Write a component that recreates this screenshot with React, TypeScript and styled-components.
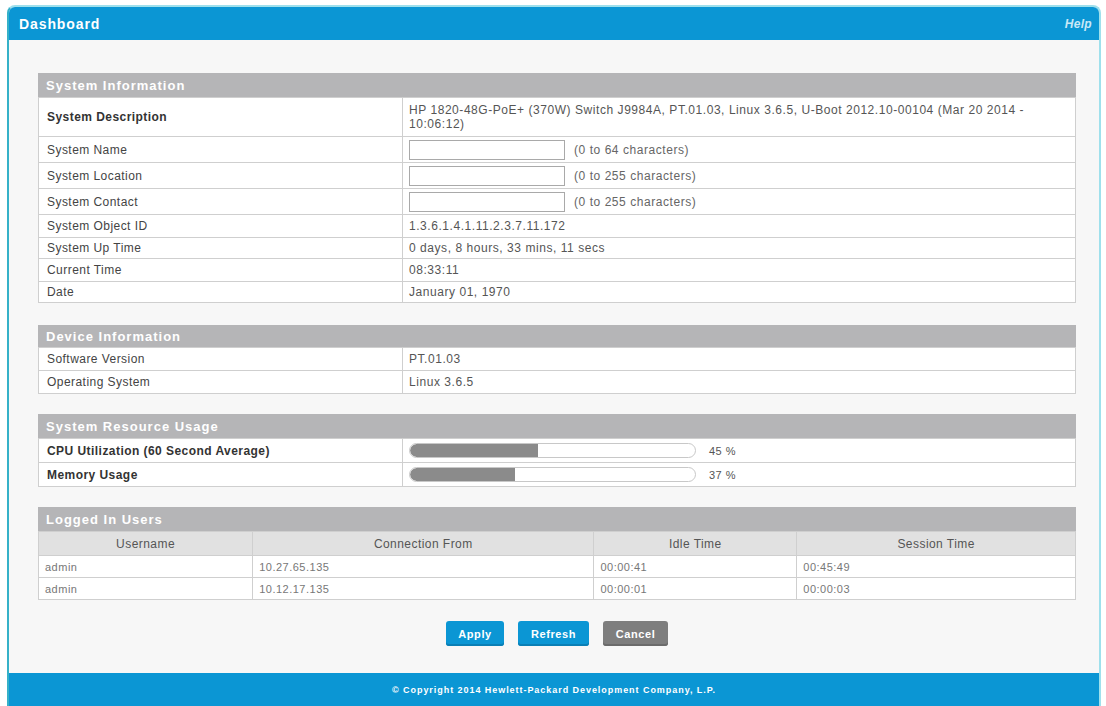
import React from "react";
import styled, { createGlobalStyle } from "styled-components";

const GlobalStyle = createGlobalStyle`
  html, body {
    margin: 0;
    padding: 0;
    background: #ffffff;
    font-family: "Liberation Sans", Arial, sans-serif;
  }
`;

const Frame = styled.div`
  margin: 5px 0 0 7px;
  width: 1094px;
  height: 701px;
  box-sizing: border-box;
  border: 2px solid #9fe0ec;
  border-left-color: #35b1c8;
  border-bottom: none;
  border-radius: 8px 8px 0 0;
  background: #f7f7f7;
  display: flex;
  flex-direction: column;
  overflow: hidden;
`;

const TopBar = styled.div`
  height: 33px;
  flex: none;
  background: #0b96d4;
  display: flex;
  align-items: center;
  justify-content: space-between;
  padding: 0 7px 0 10px;
`;

const Title = styled.div`
  color: #ffffff;
  font-weight: bold;
  font-size: 14px;
  letter-spacing: 0.9px;
`;

const Help = styled.a`
  color: #c9e8f7;
  font-weight: bold;
  font-style: italic;
  font-size: 12px;
  letter-spacing: 0.3px;
`;

const Content = styled.div`
  flex: 1;
  padding: 33px 23px 0 29px;
  display: flex;
  flex-direction: column;
`;

const Section = styled.div<{ $gap: number }>`
  margin-bottom: ${(p) => p.$gap}px;
`;

const SectionHead = styled.div<{ $h: number }>`
  height: ${(p) => p.$h}px;
  background: #b5b5b7;
  color: #ffffff;
  font-weight: bold;
  font-size: 13px;
  letter-spacing: 1px;
  display: flex;
  align-items: center;
  padding-left: 8px;
`;

const Table = styled.table`
  width: 100%;
  border-collapse: collapse;
  background: #ffffff;
  table-layout: fixed;
`;

const Row = styled.tr<{ $h: number }>`
  height: ${(p) => p.$h}px;
`;

const Label = styled.td<{ $bold?: boolean }>`
  width: 347px;
  border: 1px solid #cfcfcf;
  padding: 0 8px;
  font-size: 12px;
  letter-spacing: 0.45px;
  color: ${(p) => (p.$bold ? "#333" : "#444")};
  font-weight: ${(p) => (p.$bold ? "bold" : "normal")};
  vertical-align: middle;
`;

const Value = styled.td`
  border: 1px solid #cfcfcf;
  padding: 0 6px;
  font-size: 12px;
  letter-spacing: 0.55px;
  color: #555;
  line-height: 14px;
  vertical-align: middle;
`;

const InputLine = styled.div`
  display: flex;
  align-items: center;
  gap: 9px;
`;

const TextInput = styled.input`
  width: 156px;
  height: 20px;
  box-sizing: border-box;
  border: 1px solid #a9a9a9;
  background: #fff;
  margin: 0;
`;

const Hint = styled.span`
  color: #666;
`;

const Bar = styled.div`
  width: 287px;
  height: 15px;
  box-sizing: border-box;
  border: 1px solid #c8c8c8;
  border-radius: 8px;
  background: #fff;
  overflow: hidden;
`;

const Fill = styled.div`
  height: 100%;
  background: #8b8b8b;
  border-radius: 7px 0 0 7px;
`;

const Percent = styled.span`
  color: #555;
  margin-left: 13px;
  font-size: 11px;
  letter-spacing: 0.5px;
`;

const BarLine = styled.div`
  display: flex;
  align-items: center;
`;

const HeadCell = styled.th<{ $w: string }>`
  width: ${(p) => p.$w};
  background: #e1e1e1;
  border: 1px solid #cfcfcf;
  font-weight: normal;
  font-size: 12px;
  letter-spacing: 0.45px;
  color: #555;
  text-align: center;
`;

const Cell = styled.td`
  border: 1px solid #cfcfcf;
  padding: 0 6px;
  font-size: 11px;
  letter-spacing: 0.5px;
  color: #777;
`;

const Buttons = styled.div`
  display: flex;
  justify-content: center;
  gap: 14px;
  margin: 21px 0 0 0;
`;

const Button = styled.button<{ $grey?: boolean; $w: number }>`
  width: ${(p) => p.$w}px;
  height: 25px;
  border: none;
  border-radius: 3px;
  background: ${(p) => (p.$grey ? "#7e7e7e" : "#0b96d4")};
  box-shadow: inset 0 -2px 0 ${(p) => (p.$grey ? "#6b6b6b" : "#0a7fb5")};
  color: #fff;
  font-family: "Liberation Sans", Arial, sans-serif;
  font-weight: bold;
  font-size: 11px;
  letter-spacing: 0.6px;
  padding: 0;
`;

const Footer = styled.div`
  height: 33px;
  flex: none;
  background: #0b96d4;
  color: #fff;
  font-weight: bold;
  font-size: 9px;
  letter-spacing: 0.95px;
  display: flex;
  align-items: center;
  justify-content: center;
`;

type InfoRow = { label: string; value: React.ReactNode; h: number; bold?: boolean };

const InfoTable = ({ rows }: { rows: InfoRow[] }) => (
  <Table>
    <tbody>
      {rows.map((r) => (
        <Row key={r.label} $h={r.h}>
          <Label $bold={r.bold}>{r.label}</Label>
          <Value>{r.value}</Value>
        </Row>
      ))}
    </tbody>
  </Table>
);

const Field = ({ hint }: { hint: string }) => (
  <InputLine>
    <TextInput type="text" />
    <Hint>{hint}</Hint>
  </InputLine>
);

const Usage = ({ pct }: { pct: number }) => (
  <BarLine>
    <Bar>
      <Fill style={{ width: `${pct}%` }} />
    </Bar>
    <Percent>{pct} %</Percent>
  </BarLine>
);

const systemRows: InfoRow[] = [
  {
    label: "System Description",
    bold: true,
    h: 39,
    value:
      "HP 1820-48G-PoE+ (370W) Switch J9984A, PT.01.03, Linux 3.6.5, U-Boot 2012.10-00104 (Mar 20 2014 - 10:06:12)",
  },
  { label: "System Name", h: 26, value: <Field hint="(0 to 64 characters)" /> },
  { label: "System Location", h: 26, value: <Field hint="(0 to 255 characters)" /> },
  { label: "System Contact", h: 26, value: <Field hint="(0 to 255 characters)" /> },
  { label: "System Object ID", h: 23, value: "1.3.6.1.4.1.11.2.3.7.11.172" },
  { label: "System Up Time", h: 21, value: "0 days, 8 hours, 33 mins, 11 secs" },
  { label: "Current Time", h: 23, value: "08:33:11" },
  { label: "Date", h: 21, value: "January 01, 1970" },
];

const deviceRows: InfoRow[] = [
  { label: "Software Version", h: 23, value: "PT.01.03" },
  { label: "Operating System", h: 23, value: "Linux 3.6.5" },
];

const usageRows: InfoRow[] = [
  { label: "CPU Utilization (60 Second Average)", bold: true, h: 24, value: <Usage pct={45} /> },
  { label: "Memory Usage", bold: true, h: 24, value: <Usage pct={37} /> },
];

const users = [
  { name: "admin", from: "10.27.65.135", idle: "00:00:41", session: "00:45:49" },
  { name: "admin", from: "10.12.17.135", idle: "00:00:01", session: "00:00:03" },
];

export default function App() {
  return (
    <>
      <GlobalStyle />
      <Frame>
        <TopBar>
          <Title>Dashboard</Title>
          <Help>Help</Help>
        </TopBar>
        <Content>
          <Section $gap={22}>
            <SectionHead $h={24}>System Information</SectionHead>
            <InfoTable rows={systemRows} />
          </Section>
          <Section $gap={20}>
            <SectionHead $h={22}>Device Information</SectionHead>
            <InfoTable rows={deviceRows} />
          </Section>
          <Section $gap={20}>
            <SectionHead $h={24}>System Resource Usage</SectionHead>
            <InfoTable rows={usageRows} />
          </Section>
          <Section $gap={0}>
            <SectionHead $h={24}>Logged In Users</SectionHead>
            <Table>
              <thead>
                <Row $h={24}>
                  <HeadCell $w="20.6%">Username</HeadCell>
                  <HeadCell $w="33%">Connection From</HeadCell>
                  <HeadCell $w="19.5%">Idle Time</HeadCell>
                  <HeadCell $w="26.9%">Session Time</HeadCell>
                </Row>
              </thead>
              <tbody>
                {users.map((u, i) => (
                  <Row key={i} $h={22}>
                    <Cell>{u.name}</Cell>
                    <Cell>{u.from}</Cell>
                    <Cell>{u.idle}</Cell>
                    <Cell>{u.session}</Cell>
                  </Row>
                ))}
              </tbody>
            </Table>
          </Section>
          <Buttons>
            <Button $w={58}>Apply</Button>
            <Button $w={71}>Refresh</Button>
            <Button $w={65} $grey>
              Cancel
            </Button>
          </Buttons>
        </Content>
        <Footer>© Copyright 2014 Hewlett-Packard Development Company, L.P.</Footer>
      </Frame>
    </>
  );
}
